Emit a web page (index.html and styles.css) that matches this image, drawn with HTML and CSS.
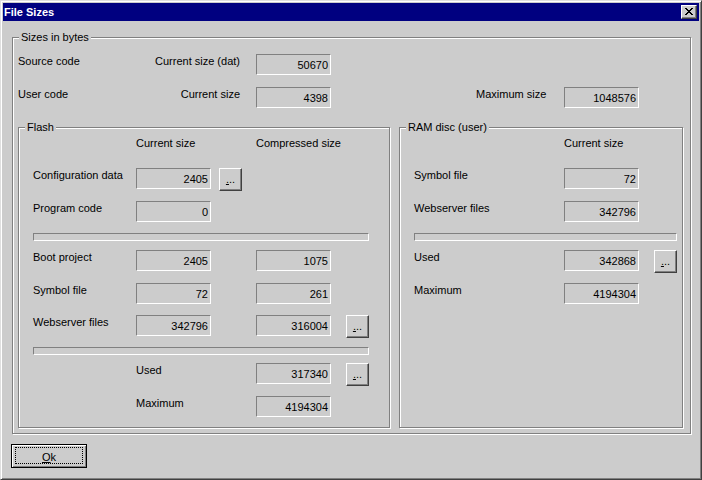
FILE: index.html
```html
<!DOCTYPE html>
<html>
<head>
<meta charset="utf-8">
<title>File Sizes</title>
<link rel="stylesheet" href="styles.css">
</head>
<body>
<div class="window">
  <div class="titlebar">
    <span class="title">File Sizes</span>
    <span class="close">
      <svg width="14" height="12" viewBox="0 0 14 12" shape-rendering="crispEdges">
        <rect x="3" y="2" width="2" height="1"/><rect x="9" y="2" width="2" height="1"/>
        <rect x="4" y="3" width="2" height="1"/><rect x="8" y="3" width="2" height="1"/>
        <rect x="5" y="4" width="4" height="1"/>
        <rect x="6" y="5" width="2" height="1"/>
        <rect x="5" y="6" width="4" height="1"/>
        <rect x="4" y="7" width="2" height="1"/><rect x="8" y="7" width="2" height="1"/>
        <rect x="3" y="8" width="2" height="1"/><rect x="9" y="8" width="2" height="1"/>
      </svg>
    </span>
  </div>
  <div class="client">
    <div class="group outer">
      <span class="legend">Sizes in bytes</span>
      <div class="trow">
        <span class="lbl c1">Source code</span>
        <span class="lbl c2 right">Current size (dat)</span>
        <div class="field c4">50670</div>
      </div>
      <div class="trow last">
        <span class="lbl c1">User code</span>
        <span class="lbl c2 right">Current size</span>
        <div class="field c4">4398</div>
        <span class="lbl c6">Maximum size</span>
        <div class="field c7">1048576</div>
      </div>
      <div class="groups">
        <div class="group flash">
          <span class="legend">Flash</span>
          <div class="row fgrid hdr">
            <span class="lbl c2">Current size</span>
            <span class="lbl c4">Compressed size</span>
          </div>
          <div class="row fgrid">
            <span class="lbl c1">Configuration data</span>
            <div class="field c2">2405</div>
            <button class="btn c3 btn-gap"><u>.</u>..</button>
          </div>
          <div class="row fgrid m11">
            <span class="lbl c1">Program code</span>
            <div class="field c2">0</div>
          </div>
          <div class="sep"></div>
          <div class="row fgrid">
            <span class="lbl c1">Boot project</span>
            <div class="field c2">2405</div>
            <div class="field c4">1075</div>
          </div>
          <div class="row fgrid m11">
            <span class="lbl c1">Symbol file</span>
            <div class="field c2">72</div>
            <div class="field c4">261</div>
          </div>
          <div class="row fgrid m11">
            <span class="lbl c1">Webserver files</span>
            <div class="field c2">342796</div>
            <div class="field c4">316004</div>
            <button class="btn c6"><u>.</u>..</button>
          </div>
          <div class="sep m8"></div>
          <div class="row fgrid">
            <span class="lbl c2">Used</span>
            <div class="field c4">317340</div>
            <button class="btn c6"><u>.</u>..</button>
          </div>
          <div class="row fgrid">
            <span class="lbl c2">Maximum</span>
            <div class="field c4">4194304</div>
          </div>
        </div>
        <div class="group ram">
          <span class="legend">RAM disc (user)</span>
          <div class="row rgrid hdr">
            <span class="lbl c2">Current size</span>
          </div>
          <div class="row rgrid">
            <span class="lbl c1">Symbol file</span>
            <div class="field c2">72</div>
          </div>
          <div class="row rgrid m11">
            <span class="lbl c1">Webserver files</span>
            <div class="field c2">342796</div>
          </div>
          <div class="sep"></div>
          <div class="row rgrid">
            <span class="lbl c1">Used</span>
            <div class="field c2">342868</div>
            <button class="btn c4"><u>.</u>..</button>
          </div>
          <div class="row rgrid">
            <span class="lbl c1">Maximum</span>
            <div class="field c2">4194304</div>
          </div>
        </div>
      </div>
    </div>
    <button class="ok"><span class="focus"><u>O</u>k</span></button>
  </div>
</div>
</body>
</html>
```
FILE: styles.css
```css
* {
  box-sizing: border-box;
}

body {
  margin: 0;
  font: 11px "Liberation Sans", Arial, sans-serif;
  color: #000;
  background: #cccccc;
}

.window {
  width: 702px;
  height: 480px;
  border: 1px solid;
  border-color: #dfdfdf #404040 #404040 #dfdfdf;
  box-shadow: inset 1px 1px #fff, inset -1px -1px #808080;
  padding: 2px;
  background: #cccccc;
  display: flex;
  flex-direction: column;
}

.titlebar {
  height: 18px;
  flex: none;
  background: #000080;
  color: #fff;
  font-weight: bold;
  line-height: 13px;
  display: flex;
  align-items: center;
  justify-content: space-between;
  padding: 0 2px 0 1px;
}

.close {
  display: block;
  width: 16px;
  height: 14px;
  background: #cccccc;
  border: 1px solid;
  border-color: #fff #404040 #404040 #fff;
  box-shadow: inset -1px -1px #808080;
}

.close svg {
  display: block;
  fill: #000;
}

.client {
  padding: 16px 0 0 8px;
}

.group {
  position: relative;
  border: 1px solid #808080;
  box-shadow: inset 1px 1px #fff, 1px 1px #fff;
}

.legend {
  position: absolute;
  top: -7px;
  left: 6px;
  padding: 0 2px;
  background: #cccccc;
  line-height: 12px;
  white-space: nowrap;
}

.outer {
  margin-left: 1px;
  width: 679px;
  height: 397px;
  padding: 16px 0 0 5px;
}

.trow {
  display: grid;
  grid-template-columns: 100px 122px 16px 75px 145px 88px 75px;
  height: 21px;
  margin-bottom: 12px;
}

.trow.last {
  margin-bottom: 19px;
}

.lbl {
  line-height: 13px;
  padding-top: 1px;
  white-space: nowrap;
}

.right {
  text-align: right;
}

.c1 { grid-column: 1; }
.c2 { grid-column: 2; }
.c3 { grid-column: 3; }
.c4 { grid-column: 4; }
.c6 { grid-column: 6; }
.c7 { grid-column: 7; }

.field {
  width: 75px;
  height: 21px;
  border: 1px solid;
  border-color: #808080 #fff #fff #808080;
  text-align: right;
  padding: 1px 2px 0 0;
  line-height: 18px;
  white-space: nowrap;
}

.groups {
  display: flex;
  gap: 9px;
}

.flash {
  width: 372px;
  height: 301px;
  padding: 8px 0 0 14px;
}

.ram {
  width: 284px;
  height: 301px;
  padding: 8px 0 0 14px;
}

.row {
  display: grid;
  height: 21px;
  margin-bottom: 12px;
}

.fgrid {
  grid-template-columns: 103px 75px 45px 75px 15px 23px;
}

.rgrid {
  grid-template-columns: 150px 75px 15px 23px;
}

.row.hdr {
  height: 13px;
  margin-bottom: 19px;
}

.row.m11 {
  margin-bottom: 11px;
}

.sep {
  height: 8px;
  border: 1px solid;
  border-color: #808080 #fff #fff #808080;
  margin-bottom: 9px;
}

.flash .sep {
  width: 336px;
}

.ram .sep {
  width: 263px;
}

.sep.m8 {
  margin-bottom: 8px;
}

.btn {
  width: 23px;
  height: 23px;
  padding: 0;
  margin: 0;
  font: inherit;
  color: #000;
  line-height: 21px;
  text-align: center;
  background: #cccccc;
  border: 1px solid;
  border-color: #fff #404040 #404040 #fff;
  box-shadow: inset -1px -1px #808080;
}

.btn-gap {
  margin-left: 8px;
}

.ok {
  display: block;
  margin: 10px 0 0 0;
  width: 76px;
  height: 24px;
  padding: 2px 3px 3px 3px;
  font: inherit;
  color: #000;
  background: #cccccc;
  border: 1px solid #000;
  box-shadow: inset 1px 1px #fff, inset -1px -1px #808080;
}

.focus {
  display: block;
  height: 17px;
  border: 1px dotted #000;
  padding-top: 3px;
  line-height: 12px;
  text-align: center;
}
```
